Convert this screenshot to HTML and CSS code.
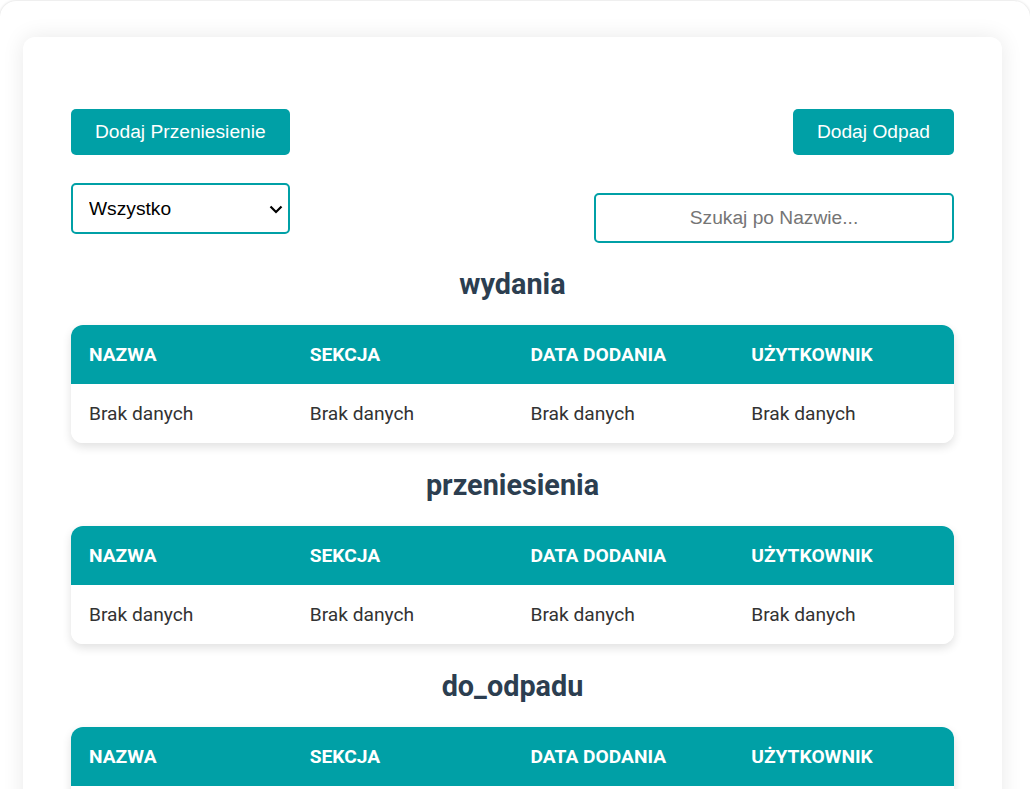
FILE: index.html
```html
<!doctype html>
<html lang="pl">
<head>
    <meta charset="UTF-8">
    <title>Odpady</title>
    <link rel="stylesheet" href="styles.css">
</head>
<body>
<div class="page">
    <div class="card">
        <div class="actions">
            <button class="btn">Dodaj Przeniesienie</button>
            <button class="btn">Dodaj Odpad</button>
        </div>
        <div class="filters">
            <div class="select-wrap">
                <select class="filter">
                    <option>Wszystko</option>
                    <option>wydania</option>
                    <option>przeniesienia</option>
                    <option>do_odpadu</option>
                </select>
                <svg class="chevron" width="14" height="9" viewBox="0 0 14 9"><path d="M1.5 1.5 L7 7 L12.5 1.5" fill="none" stroke="#000" stroke-width="2.2"/></svg>
            </div>
            <input class="search" type="text" placeholder="Szukaj po Nazwie...">
        </div>

        <h2 class="title">wydania</h2>
        <table class="list">
            <thead>
                <tr><th>Nazwa</th><th>Sekcja</th><th>Data dodania</th><th>Użytkownik</th></tr>
            </thead>
            <tbody>
                <tr><td>Brak danych</td><td>Brak danych</td><td>Brak danych</td><td>Brak danych</td></tr>
            </tbody>
        </table>

        <h2 class="title">przeniesienia</h2>
        <table class="list">
            <thead>
                <tr><th>Nazwa</th><th>Sekcja</th><th>Data dodania</th><th>Użytkownik</th></tr>
            </thead>
            <tbody>
                <tr><td>Brak danych</td><td>Brak danych</td><td>Brak danych</td><td>Brak danych</td></tr>
            </tbody>
        </table>

        <h2 class="title">do_odpadu</h2>
        <table class="list">
            <thead>
                <tr><th>Nazwa</th><th>Sekcja</th><th>Data dodania</th><th>Użytkownik</th></tr>
            </thead>
            <tbody>
                <tr><td>Brak danych</td><td>Brak danych</td><td>Brak danych</td><td>Brak danych</td></tr>
            </tbody>
        </table>
    </div>
</div>
</body>
</html>
```

FILE: styles.css
```css
html,body{
    margin:0;
    padding:0;
    background:#fff;
    font-family:Roboto, "Liberation Sans", sans-serif;
    color:#333;
}
.page{
    margin-top:1px;
    padding:36px 28px 40px 23px;
    border-radius:16px;
    box-shadow:0 0 3px rgba(0,0,0,0.18);
}
.card{
    background:#fff;
    border-radius:12px;
    padding:72px 48px 48px;
    box-shadow:0 0 22px rgba(0,0,0,0.09);
}
.actions{
    display:flex;
    justify-content:space-between;
}
.btn{
    background:#00a0a6;
    color:#fff;
    border:none;
    border-radius:5px;
    height:46px;
    padding:0 24px;
    font-family:"Liberation Sans", Arial, sans-serif;
    font-size:19.2px;
    cursor:pointer;
}
.filters{
    display:flex;
    justify-content:space-between;
    align-items:flex-start;
    margin-top:28px;
}
.select-wrap{
    position:relative;
}
.filter{
    appearance:none;
    -webkit-appearance:none;
    display:block;
    width:219px;
    height:51px;
    padding:0 36px 0 16px;
    border:2px solid #00a0a6;
    border-radius:5px;
    background:#fff;
    color:#000;
    font-family:"Liberation Sans", Arial, sans-serif;
    font-size:19.2px;
}
.chevron{
    position:absolute;
    right:7px;
    top:22px;
    pointer-events:none;
}
.search{
    box-sizing:border-box;
    width:360px;
    height:50px;
    margin-top:10px;
    border:2px solid #00a0a6;
    border-radius:5px;
    text-align:center;
    font-family:"Liberation Sans", Arial, sans-serif;
    font-size:19.2px;
    color:#333;
}
.search::placeholder{
    color:#757575;
}
.title{
    text-align:center;
    font-size:28.8px;
    font-weight:700;
    color:#2c3e50;
    margin:25px 0 24px;
}
.filters + .title{
    margin-top:24px;
}
.list{
    width:100%;
    border-collapse:collapse;
    table-layout:fixed;
    border-radius:12px;
    overflow:hidden;
    box-shadow:0 4px 10px rgba(0,0,0,0.12);
}
.list th{
    background:#00a0a6;
    color:#fff;
    text-align:left;
    text-transform:uppercase;
    font-size:19.2px;
    font-weight:700;
    line-height:23px;
    padding:18px;
}
.list td{
    background:#fff;
    font-size:19.2px;
    line-height:23px;
    padding:18px;
    color:#333;
}
```
